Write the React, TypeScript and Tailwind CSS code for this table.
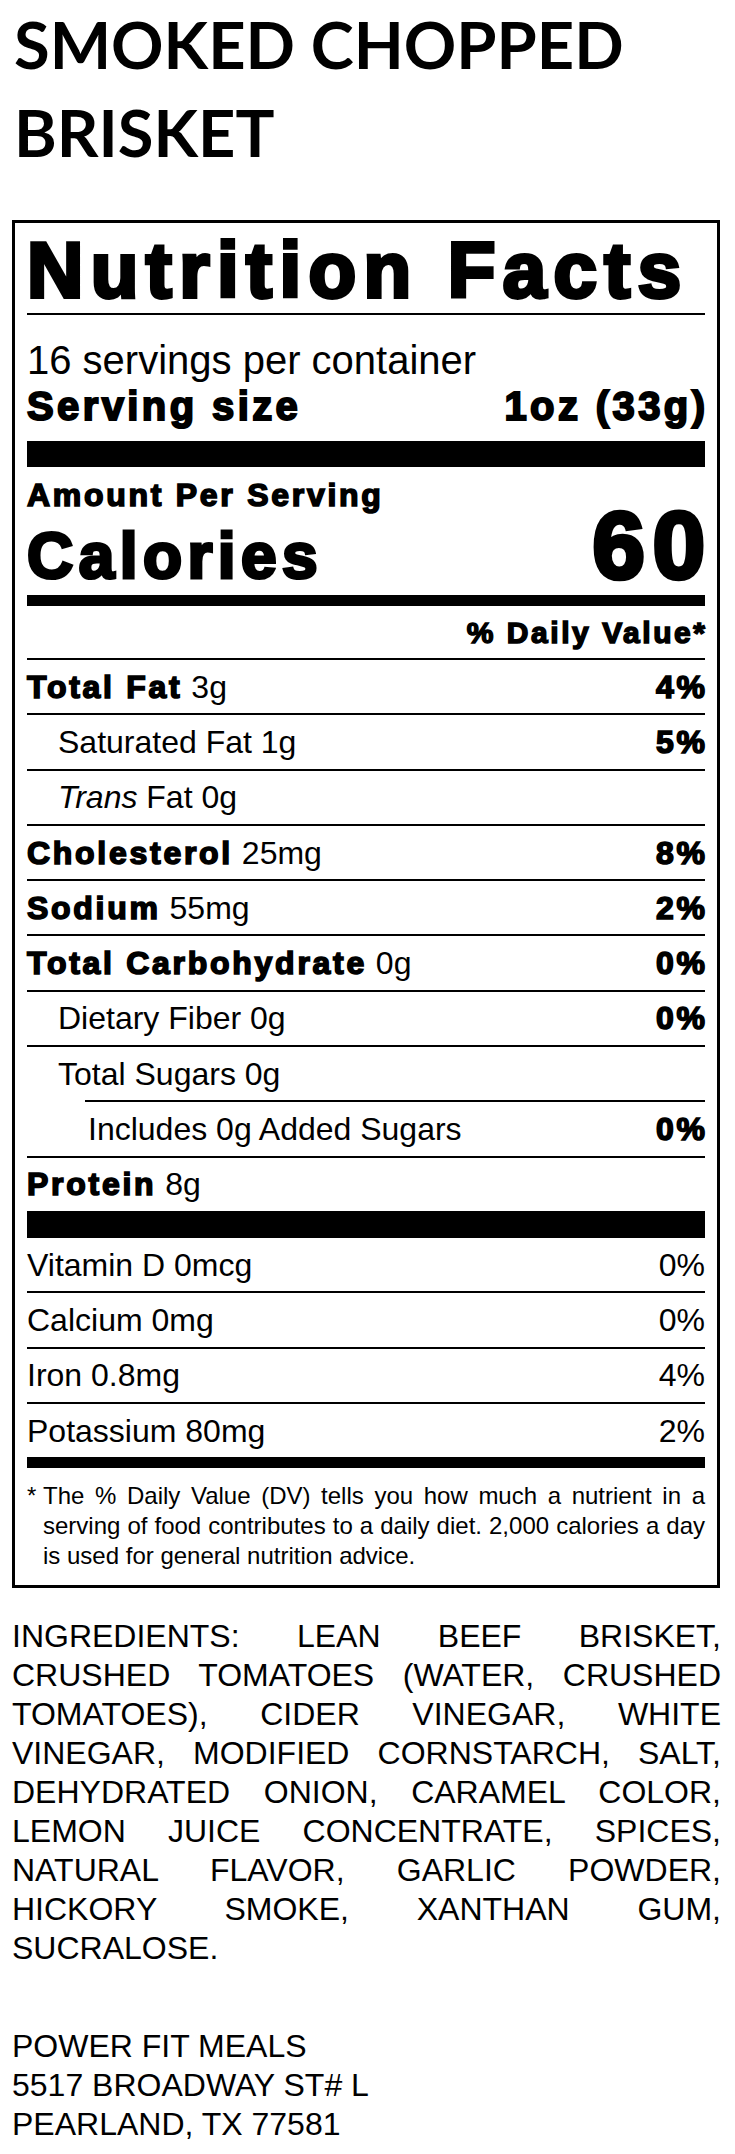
const sans = "font-['Liberation_Sans',Arial,Helvetica,sans-serif]";
const heavy = "font-bold tracking-[0.085em] [-webkit-text-stroke:0.05em_currentColor]";

type RowProps = {
  name: React.ReactNode;
  amount?: string;
  pct?: string;
  bold?: boolean;
  indent?: string;
  plainPct?: boolean;
  noBorder?: boolean;
  lineIndent?: boolean;
};

function Row({ name, amount, pct, bold, indent = "", plainPct, noBorder, lineIndent }: RowProps) {
  return (
    <div
      className={`flex items-center justify-between ${noBorder ? "h-[53.3px]" : "h-[55.3px] border-t-2 border-black"} ${lineIndent ? "ml-[58px] pl-[3px]" : indent}`}
    >
      <div className="text-[32px] leading-[36px] whitespace-nowrap">
        {bold ? <span className={heavy}>{name}</span> : name}
        {amount && <span> {amount}</span>}
      </div>
      {pct && (
        <div
          className={`text-[32px] leading-[36px] ${plainPct ? "" : `${heavy} mr-[-0.085em]`}`}
        >
          {pct}
        </div>
      )}
    </div>
  );
}

export default function App() {
  return (
    <div className={`min-h-screen bg-white text-black px-[12px] ${sans}`}>
      {/* Product title */}
      <h1 className="font-['Lato',sans-serif] font-bold text-[65px] leading-[88px] uppercase pl-[2px]">
        Smoked Chopped
        <br />
        Brisket
      </h1>

      {/* Label */}
      <div className="mt-[44px] w-[708px] border-[3px] border-black px-[12px]">
        <div className={`pt-[8px] pb-[4px] border-b-2 border-black text-[78px] leading-[78px] whitespace-nowrap ${heavy} tracking-[0.095em]`}>
          Nutrition Facts
        </div>

        <div className="pt-[22px]">
          <div className="text-[40px] leading-[46px]">16 servings per container</div>
          <div className="flex justify-between text-[40px] leading-[46px]">
            <span className={heavy}>Serving size</span>
            <span className={`${heavy} mr-[-0.085em]`}>1oz (33g)</span>
          </div>
        </div>

        <div className="mt-[12px] h-[26px] bg-black" />

        <div className={`pt-[12px] text-[32px] leading-[32px] ${heavy}`}>Amount Per Serving</div>
        <div className="flex items-baseline justify-between h-[70px]">
          <span className={`text-[64px] leading-[70px] ${heavy}`}>Calories</span>
          <span className={`text-[94px] leading-[70px] ${heavy} mr-[-0.085em]`}>60</span>
        </div>

        <div className="mt-[14px] h-[11px] bg-black" />

        <div className={`pt-[9px] pb-[7px] text-right text-[30px] leading-[36px] ${heavy} mr-[-0.085em]`}>
          % Daily Value*
        </div>

        <Row name="Total Fat" amount="3g" pct="4%" bold />
        <Row name="Saturated Fat 1g" pct="5%" indent="pl-[31px]" />
        <Row name={<><i>Trans</i> Fat 0g</>} indent="pl-[31px]" />
        <Row name="Cholesterol" amount="25mg" pct="8%" bold />
        <Row name="Sodium" amount="55mg" pct="2%" bold />
        <Row name="Total Carbohydrate" amount="0g" pct="0%" bold />
        <Row name="Dietary Fiber 0g" pct="0%" indent="pl-[31px]" />
        <Row name="Total Sugars 0g" indent="pl-[31px]" />
        <Row name="Includes 0g Added Sugars" pct="0%" lineIndent />
        <Row name="Protein" amount="8g" bold />

        <div className="h-[27px] bg-black" />

        <Row name="Vitamin D 0mcg" pct="0%" plainPct noBorder />
        <Row name="Calcium 0mg" pct="0%" plainPct />
        <Row name="Iron 0.8mg" pct="4%" plainPct />
        <Row name="Potassium 80mg" pct="2%" plainPct />

        <div className="h-[11px] bg-black" />

        <div className="flex pt-[13px] pb-[14px] text-[24px] leading-[30px]">
          <span className="w-[16px] shrink-0">*</span>
          <p className="text-justify">
            The % Daily Value (DV) tells you how much a nutrient in a serving of food
            contributes to a daily diet. 2,000 calories a day is used for general nutrition
            advice.
          </p>
        </div>
      </div>

      {/* Ingredients */}
      <p className="mt-[29px] w-[709px] text-[32px] leading-[39px] text-justify uppercase">
        Ingredients: Lean beef brisket, crushed tomatoes (water, crushed tomatoes), cider
        vinegar, white vinegar, modified cornstarch, salt, dehydrated onion, caramel color,
        lemon juice concentrate, spices, natural flavor, garlic powder, hickory smoke, xanthan
        gum, sucralose.
      </p>

      {/* Manufacturer */}
      <div className="mt-[59px] text-[32px] leading-[39px]">
        <div>POWER FIT MEALS</div>
        <div>5517 BROADWAY ST# L</div>
        <div>PEARLAND, TX 77581</div>
      </div>
    </div>
  );
}
